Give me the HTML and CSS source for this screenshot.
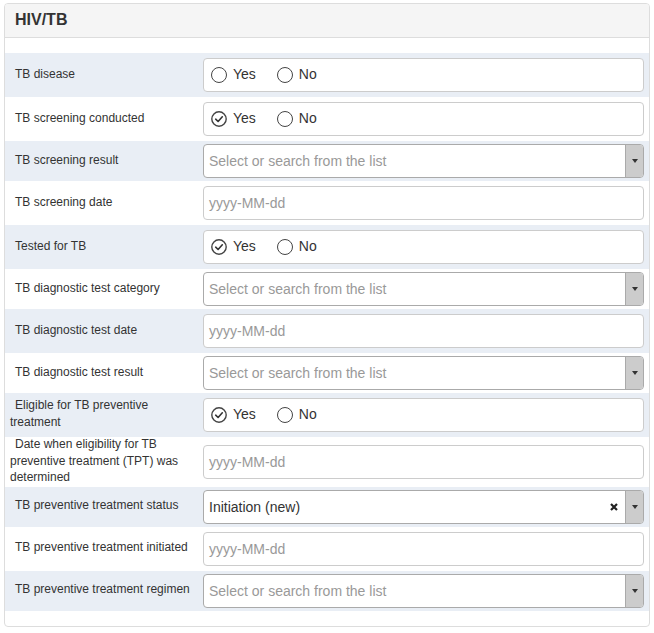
FILE: index.html
```html
<!DOCTYPE html>
<html>
<head>
<meta charset="utf-8">
<title>HIV/TB</title>
<link rel="stylesheet" href="styles.css">
</head>
<body>
<div class="panel">
  <div class="panel-heading">HIV/TB</div>
  <div class="panel-body">

    <div class="row shaded">
      <div class="label">TB disease</div>
      <div class="field">
        <div class="radios">
          <span class="opt"><span class="radio"></span>Yes</span>
          <span class="opt"><span class="radio"></span>No</span>
        </div>
      </div>
    </div>

    <div class="row">
      <div class="label">TB screening conducted</div>
      <div class="field">
        <div class="radios">
          <span class="opt"><svg class="radio-svg" viewBox="0 0 16 16"><circle cx="8" cy="8" r="7.2"/><path d="M4.7 8.2 L7.1 10.5 L11.3 5.8"/></svg>Yes</span>
          <span class="opt"><span class="radio"></span>No</span>
        </div>
      </div>
    </div>

    <div class="row shaded sel-row">
      <div class="label">TB screening result</div>
      <div class="field">
        <div class="select"><span class="placeholder">Select or search from the list</span><span class="arrow"><span class="tri"></span></span></div>
      </div>
    </div>

    <div class="row">
      <div class="label">TB screening date</div>
      <div class="field">
        <div class="input"><span class="placeholder">yyyy-MM-dd</span></div>
      </div>
    </div>

    <div class="row shaded">
      <div class="label">Tested for TB</div>
      <div class="field">
        <div class="radios">
          <span class="opt"><svg class="radio-svg" viewBox="0 0 16 16"><circle cx="8" cy="8" r="7.2"/><path d="M4.7 8.2 L7.1 10.5 L11.3 5.8"/></svg>Yes</span>
          <span class="opt"><span class="radio"></span>No</span>
        </div>
      </div>
    </div>

    <div class="row sel-row">
      <div class="label">TB diagnostic test category</div>
      <div class="field">
        <div class="select"><span class="placeholder">Select or search from the list</span><span class="arrow"><span class="tri"></span></span></div>
      </div>
    </div>

    <div class="row shaded">
      <div class="label">TB diagnostic test date</div>
      <div class="field">
        <div class="input"><span class="placeholder">yyyy-MM-dd</span></div>
      </div>
    </div>

    <div class="row sel-row">
      <div class="label">TB diagnostic test result</div>
      <div class="field">
        <div class="select"><span class="placeholder">Select or search from the list</span><span class="arrow"><span class="tri"></span></span></div>
      </div>
    </div>

    <div class="row shaded">
      <div class="label">Eligible for TB preventive treatment</div>
      <div class="field">
        <div class="radios">
          <span class="opt"><svg class="radio-svg" viewBox="0 0 16 16"><circle cx="8" cy="8" r="7.2"/><path d="M4.7 8.2 L7.1 10.5 L11.3 5.8"/></svg>Yes</span>
          <span class="opt"><span class="radio"></span>No</span>
        </div>
      </div>
    </div>

    <div class="row">
      <div class="label">Date when eligibility for TB preventive treatment (TPT) was determined</div>
      <div class="field">
        <div class="input"><span class="placeholder">yyyy-MM-dd</span></div>
      </div>
    </div>

    <div class="row shaded sel-row">
      <div class="label">TB preventive treatment status</div>
      <div class="field">
        <div class="select"><span class="value">Initiation (new)</span><svg class="clear" viewBox="0 0 8 8"><path d="M1 1 L7 7 M7 1 L1 7"/></svg><span class="arrow"><span class="tri"></span></span></div>
      </div>
    </div>

    <div class="row">
      <div class="label">TB preventive treatment initiated</div>
      <div class="field">
        <div class="input"><span class="placeholder">yyyy-MM-dd</span></div>
      </div>
    </div>

    <div class="row shaded sel-row">
      <div class="label">TB preventive treatment regimen</div>
      <div class="field">
        <div class="select"><span class="placeholder">Select or search from the list</span><span class="arrow"><span class="tri"></span></span></div>
      </div>
    </div>

  </div>
</div>
</body>
</html>
```

FILE: styles.css
```css
* { box-sizing: border-box; }

body {
  margin: 0;
  background: #fff;
  font-family: "Liberation Sans", Arial, sans-serif;
  color: #333;
}

.panel {
  margin: 3px 0 0 4px;
  width: 646px;
  border: 1px solid #ddd;
  border-radius: 4px;
  background: #fff;
}

.panel-heading {
  height: 34px;
  line-height: 32px;
  padding: 0 10px;
  background: #f5f5f5;
  border-bottom: 1px solid #ddd;
  border-radius: 3px 3px 0 0;
  font-size: 16px;
  font-weight: bold;
  color: #333;
}

.panel-body {
  padding: 15px 0;
}

.row {
  display: flex;
  align-items: center;
}

.row.shaded {
  background: #e9eef5;
}

.label {
  width: 198px;
  flex: none;
  padding: 0 6px 0 5px;
  text-indent: 5px;
  font-size: 12px;
  line-height: 16.6px;
  color: #333;
  position: relative;
  top: -1px;
}

.field {
  flex: 1;
  padding: 5px 5px 5px 0;
}

.sel-row .field {
  padding: 3px 5px 3px 0;
}

.radios,
.input,
.select {
  height: 34px;
  border: 1px solid #ccc;
  border-radius: 4px;
  background: #fff;
  display: flex;
  align-items: center;
  font-size: 14px;
}

.radios {
  padding-left: 7px;
}

.opt {
  display: flex;
  align-items: center;
  margin-right: 21px;
  color: #333;
  position: relative;
  top: -1px;
}

.radio {
  width: 16px;
  height: 16px;
  border: 1.4px solid #444;
  border-radius: 50%;
  margin-right: 6px;
  position: relative;
  top: 1px;
}

.radio-svg {
  width: 16px;
  height: 16px;
  margin-right: 6px;
  position: relative;
  top: 1px;
}

.radio-svg circle {
  fill: none;
  stroke: #444;
  stroke-width: 1.4;
}

.radio-svg path {
  fill: none;
  stroke: #333;
  stroke-width: 1.6;
  stroke-linecap: round;
  stroke-linejoin: round;
}

.input {
  padding-left: 5px;
}

.select {
  padding-left: 5px;
  border-color: #aaa;
}

.placeholder {
  color: #999;
}

.value {
  color: #333;
}

.select .placeholder,
.select .value {
  flex: 1;
}

.clear {
  width: 8px;
  height: 8px;
  margin-right: 7px;
}

.clear path {
  stroke: #222;
  stroke-width: 2.2;
  fill: none;
}

.arrow {
  width: 18px;
  height: 32px;
  background: #ccc;
  border-left: 1px solid #aaa;
  border-radius: 0 3px 3px 0;
  display: flex;
  align-items: center;
  justify-content: center;
}

.tri {
  width: 0;
  height: 0;
  border-left: 3.5px solid transparent;
  border-right: 3.5px solid transparent;
  border-top: 4px solid #333;
}
```
